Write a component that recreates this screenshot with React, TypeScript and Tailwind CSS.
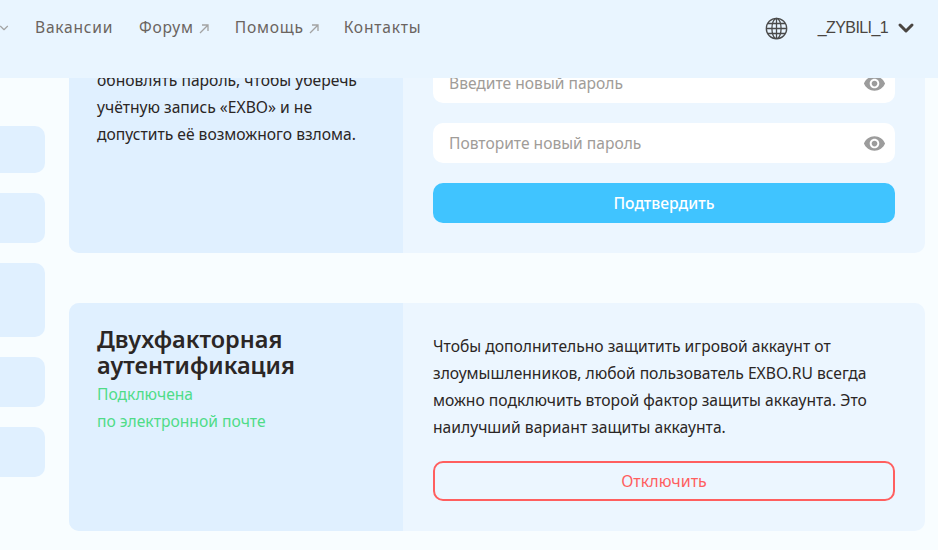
import { ChevronDown } from 'lucide-react';

const sideItems = ['h-[47px]', 'h-[50px]', 'h-[74px]', 'h-[50px]', 'h-[50px]'];

function NavArrow() {
  return (
    <svg width="10" height="10" viewBox="0 0 10 10" fill="none" stroke="#a3a3a3" strokeWidth="1.3" className="ml-[5px] mt-[2px]">
      <path d="M1 9 L9 1 M3 1 H9 V7" />
    </svg>
  );
}

function GlobeIcon() {
  return (
    <svg width="23" height="23" viewBox="0 0 23 23" fill="none" stroke="#4a4a4a" strokeWidth="1.3">
      <circle cx="11.5" cy="11.5" r="10.2" />
      <ellipse cx="11.5" cy="11.5" rx="4.6" ry="10.2" />
      <path d="M11.5 1.3 V21.7 M1.3 11.5 H21.7 M3 6.5 H20 M3 16.5 H20" />
    </svg>
  );
}

function EyeIcon() {
  return (
    <svg width="23" height="23" viewBox="0 0 24 24" fill="#9c9c9c">
      <path d="M12 4.5C7 4.5 2.73 7.61 1 12c1.73 4.39 6 7.5 11 7.5s9.27-3.11 11-7.5c-1.73-4.39-6-7.5-11-7.5zM12 17c-2.76 0-5-2.24-5-5s2.24-5 5-5 5 2.24 5 5-2.24 5-5 5zm0-8c-1.66 0-3 1.34-3 3s1.34 3 3 3 3-1.34 3-3-1.34-3-3-3z" />
    </svg>
  );
}

function PasswordField({ placeholder }: { placeholder: string }) {
  return (
    <div className="flex h-10 items-center justify-between rounded-[10px] bg-white pl-4 pr-[9px]">
      <span className="pt-[1px] text-[15.6px] text-[#a09c98]">{placeholder}</span>
      <EyeIcon />
    </div>
  );
}

export default function App() {
  return (
    <div className="relative h-[550px] w-[938px] overflow-hidden bg-[#f8fdff] font-['Noto_Sans','Open_Sans',sans-serif] text-[#2b2625]">
      <header className="absolute inset-x-0 top-0 z-10 flex h-[78px] items-start bg-[#e9f5ff] pt-[16px]">
        <ChevronDown size={14} className="-ml-[3px] mt-[5px] text-[#a3a3a3]" />
        <nav className="ml-[24px] flex text-[15.6px] tracking-[0.75px] text-[#6b6460]">
          <span>Вакансии</span>
          <span className="ml-[26px] flex items-center">Форум<NavArrow /></span>
          <span className="ml-[26px] flex items-center">Помощь<NavArrow /></span>
          <span className="ml-[25px]">Контакты</span>
        </nav>
        <div className="ml-auto mr-[20px] flex items-center">
          <GlobeIcon />
          <span className="ml-[30px] font-['Liberation_Sans',sans-serif] text-[16px] font-medium tracking-[-0.6px] text-[#4a4541]">_ZYBILI_1</span>
          <ChevronDown size={24} strokeWidth={3} className="ml-[6px] text-[#4a4541]" />
        </div>
      </header>

      <div className="flex">
        <aside className="mt-[126px] flex w-[45px] shrink-0 flex-col gap-5">
          {sideItems.map((h, i) => (
            <div key={i} className={`${h} rounded-r-[10px] bg-[#e0f0ff]`} />
          ))}
        </aside>

        <main className="ml-6 flex w-[856px] flex-col gap-[50px]">
          <section className="-mt-[30px] flex h-[283px] overflow-hidden rounded-[10px] bg-[#ecf6ff]">
            <div className="w-[334px] shrink-0 bg-[#e0f0ff] pl-7 pt-[97px] text-[15.65px] leading-[27px]">
              <p>обновлять пароль, чтобы уберечь<br />учётную запись «EXBO» и не<br />допустить её возможного взлома.</p>
            </div>
            <div className="flex flex-1 flex-col gap-5 pl-[30px] pr-[30px] pt-[93px]">
              <PasswordField placeholder="Введите новый пароль" />
              <PasswordField placeholder="Повторите новый пароль" />
              <button className="h-10 rounded-[10px] bg-[#40c4ff] pt-[1px] text-[15.7px] font-medium text-white">Подтвердить</button>
            </div>
          </section>

          <section className="flex h-[228px] overflow-hidden rounded-[10px] bg-[#ecf6ff]">
            <div className="w-[334px] shrink-0 bg-[#e0f0ff] pl-7 pt-[23px]">
              <h2 className="text-[23.5px] font-semibold leading-[26px]">Двухфакторная<br />аутентификация</h2>
              <p className="mt-[3px] text-[15.65px] leading-[27px] text-[#4fdc88]">Подключена<br />по электронной почте</p>
            </div>
            <div className="flex-1 px-[30px] pt-[30px]">
              <p className="text-[15.65px] leading-[27px]">
                Чтобы дополнительно защитить игровой аккаунт от<br />
                злоумышленников, любой пользователь EXBO.RU всегда<br />
                можно подключить второй фактор защиты аккаунта. Это<br />
                наилучший вариант защиты аккаунта.
              </p>
              <button className="mt-5 h-10 w-full rounded-[10px] border-2 border-[#ff5f5f] text-[16px] text-[#ff5f5f]">Отключить</button>
            </div>
          </section>
        </main>
      </div>
    </div>
  );
}
